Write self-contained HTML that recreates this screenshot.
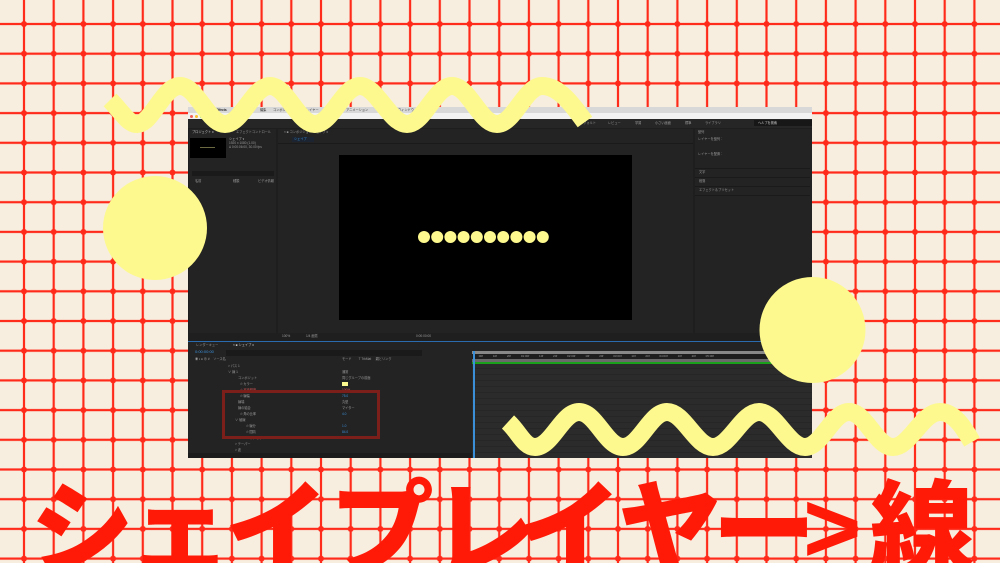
<!DOCTYPE html>
<html style="width:1000px;height:563px;overflow:hidden"><head><meta charset="utf-8"><style>
*{margin:0;padding:0;box-sizing:border-box}
html,body{overflow:hidden}
body{width:1000px;height:563px;overflow:hidden;background:#f7eedf;position:relative;font-family:"Liberation Sans","Noto Sans CJK JP",sans-serif}
.a{position:absolute}
.t{position:absolute;font-size:3.2px;color:#9a9a9a;white-space:nowrap;line-height:1}
.ttl{position:absolute;top:470px;font-family:"Noto Sans CJK JP","Liberation Sans",sans-serif;font-weight:900;font-size:104px;line-height:1;color:#ff1a08;white-space:nowrap}
</style></head><body>
<svg class="a" style="left:0;top:0" width="1000" height="563">
<defs>
<pattern id="g" x="9.15" y="9.15" width="29.7" height="29.7" patternUnits="userSpaceOnUse">
<line x1="14.85" y1="0" x2="14.85" y2="29.7" stroke="#ff2a1a" stroke-width="2.2"/>
<line x1="0" y1="14.85" x2="29.7" y2="14.85" stroke="#ff2a1a" stroke-width="2.2"/>
<circle cx="14.85" cy="14.85" r="3" fill="#ff2a1a"/>
</pattern>
</defs>
<rect width="1000" height="563" fill="url(#g)"/>
</svg>

<div class="a" style="left:188px;top:107px;width:624px;height:351px;background:#1e1e1e;overflow:hidden">
  <div class="a" style="left:0;top:0;width:624px;height:6px;background:#d8d8d8"></div>
  <div class="t" style="left:28px;top:1.5px;color:#222;font-weight:bold">Effects</div>
  <div class="t" style="left:72px;top:1.5px;color:#333">編集</div>
  <div class="t" style="left:85px;top:1.5px;color:#333">コンポジション</div>
  <div class="t" style="left:118px;top:1.5px;color:#333">レイヤー</div>
  <div class="t" style="left:158px;top:1.5px;color:#333">アニメーション</div>
  <div class="t" style="left:210px;top:1.5px;color:#333">ウィンドウ</div>
  <div class="a" style="left:0;top:6px;width:624px;height:6px;background:#f2f2f2"></div>
  <div class="a" style="left:2px;top:8px;width:3px;height:3px;border-radius:50%;background:#f25f58"></div>
  <div class="a" style="left:7px;top:8px;width:3px;height:3px;border-radius:50%;background:#fbbe2e"></div>
  <div class="a" style="left:12px;top:8px;width:3px;height:3px;border-radius:50%;background:#39c94b"></div>
  <div class="a" style="left:0;top:12px;width:624px;height:9px;background:#262626"></div>
  <div class="t" style="left:392px;top:15px">デフォルト</div>
  <div class="t" style="left:420px;top:15px">レビュー</div>
  <div class="t" style="left:447px;top:15px">学習</div>
  <div class="t" style="left:467px;top:15px">小さい画面</div>
  <div class="t" style="left:497px;top:15px">標準</div>
  <div class="t" style="left:517px;top:15px">ライブラリ</div>
  <div class="a" style="left:566px;top:13px;width:58px;height:6px;background:#171717"></div>
  <div class="t" style="left:570px;top:14.5px;color:#ccc">ヘルプを検索</div>
  <div class="a" style="left:1px;top:22px;width:87px;height:204px;background:#232323"></div>
  <div class="t" style="left:4px;top:24px;color:#ccc">プロジェクト ≡</div>
  <div class="t" style="left:48px;top:24px">エフェクトコントロール</div>
  <div class="a" style="left:2px;top:31px;width:36px;height:20px;background:#000"></div>
  <div class="a" style="left:12px;top:40px;width:15px;height:1px;background:#6b6a40"></div>
  <div class="t" style="left:41px;top:31px;color:#bbb">シェイプ ▾</div>
  <div class="t" style="left:41px;top:35px">1920 x 1080 (1.00)</div>
  <div class="t" style="left:41px;top:39px">Δ 0:00:06:00, 30.00 fps</div>
  <div class="a" style="left:4px;top:64px;width:82px;height:5px;background:#1a1a1a"></div>
  <div class="t" style="left:7px;top:73px">名前</div>
  <div class="t" style="left:45px;top:73px">種類</div>
  <div class="t" style="left:70px;top:73px">ビデオ情報</div>
  <div class="a" style="left:90px;top:22px;width:415px;height:204px;background:#232323"></div>
  <div class="t" style="left:96px;top:24px">× ■ コンポジション シェイプ ≡</div>
  <div class="a" style="left:104px;top:30px;width:22px;height:5px;background:#1b2430"></div>
  <div class="t" style="left:106px;top:31px;color:#3b8fd9">シェイプ</div>
  <div class="a" style="left:90px;top:36px;width:415px;height:1px;background:#1a1a1a"></div>
  <div class="a" style="left:151px;top:48px;width:293px;height:165px;background:#000"></div>
  <div class="a" style="left:507px;top:22px;width:117px;height:204px;background:#232323"></div>
  <div class="t" style="left:510px;top:24px">整列</div>
  <div class="t" style="left:510px;top:31px">レイヤーを整列：</div>
  <div class="t" style="left:510px;top:46px">レイヤーを配置：</div>
  <div class="a" style="left:507px;top:61px;width:115px;height:1px;background:#1a1a1a"></div>
  <div class="t" style="left:511px;top:64px">文字</div>
  <div class="a" style="left:507px;top:70px;width:115px;height:1px;background:#1a1a1a"></div>
  <div class="t" style="left:511px;top:73px">段落</div>
  <div class="a" style="left:507px;top:79px;width:115px;height:1px;background:#1a1a1a"></div>
  <div class="t" style="left:511px;top:82px">エフェクト＆プリセット</div>
  <div class="a" style="left:507px;top:88px;width:115px;height:1px;background:#1a1a1a"></div>
  <div class="a" style="left:0;top:226px;width:624px;height:8px;background:#1f1f1f"></div>
  <div class="t" style="left:94px;top:228px">100%</div>
  <div class="t" style="left:118px;top:228px">1/4 画質</div>
  <div class="t" style="left:228px;top:228px">0:00:00:00</div>
  <div class="a" style="left:0;top:234px;width:624px;height:1px;background:#2a6bb0"></div>
  <div class="a" style="left:0;top:235px;width:624px;height:116px;background:#232323"></div>
  <div class="t" style="left:8px;top:237px">レンダーキュー</div>
  <div class="t" style="left:45px;top:237px;color:#ccc">× ■ シェイプ ≡</div>
  <div class="t" style="left:7px;top:243px;color:#3b8fd9;font-size:4px">0:00:00:00</div>
  <div class="a" style="left:38px;top:243px;width:196px;height:6px;background:#1a1a1a"></div>
  <div class="t" style="left:7px;top:251px">◉◑ ● ⊕ #&nbsp;&nbsp;&nbsp; ソース名</div>
  <div class="t" style="left:154px;top:251px">モード&nbsp;&nbsp;&nbsp;&nbsp;&nbsp;&nbsp;&nbsp; T TrkMat&nbsp;&nbsp;&nbsp;&nbsp; 親とリンク</div>
  <div class="t" style="left:40px;top:258px">&gt; パス 1</div>
  <div class="t" style="left:40px;top:264px">∨ 線 1</div>
  <div class="t" style="left:50px;top:270px">コンポジット</div>
  <div class="t" style="left:52px;top:276px">⏱ カラー</div>
  <div class="t" style="left:52px;top:282px;color:#d05050">⏱ 不透明度</div>
  <div class="t" style="left:52px;top:288px">⏱ 線幅</div>
  <div class="t" style="left:50px;top:294px">線端</div>
  <div class="t" style="left:50px;top:300px">線の結合</div>
  <div class="t" style="left:52px;top:306px">⏱ 角の比率</div>
  <div class="t" style="left:47px;top:312px">∨ 破線</div>
  <div class="t" style="left:58px;top:318px">⏱ 線分</div>
  <div class="t" style="left:58px;top:324px">⏱ 間隔</div>
  <div class="t" style="left:58px;top:330px;color:#d05050">⏱ オフセット</div>
  <div class="t" style="left:47px;top:336px">&gt; テーパー</div>
  <div class="t" style="left:47px;top:342px">&gt; 波</div>
  <div class="t" style="left:154px;top:264px">通常</div>
  <div class="t" style="left:154px;top:270px">同じグループの前面</div>
  <div class="a" style="left:154px;top:275px;width:6px;height:4px;background:#fdf98e"></div>
  <div class="t" style="left:154px;top:282px;color:#d05050">100%</div>
  <div class="t" style="left:154px;top:288px;color:#3b8fd9">75.0</div>
  <div class="t" style="left:154px;top:294px">丸型</div>
  <div class="t" style="left:154px;top:300px">マイター</div>
  <div class="t" style="left:154px;top:306px;color:#3b8fd9">4.0</div>
  <div class="t" style="left:154px;top:318px;color:#3b8fd9">1.0</div>
  <div class="t" style="left:154px;top:324px;color:#3b8fd9">84.0</div>
  <div class="t" style="left:154px;top:330px;color:#d05050">0.0</div>
  <div class="a" style="left:34px;top:283px;width:158px;height:49px;border:3px solid #7c1e1a"></div>
  <div class="a" style="left:0;top:346px;width:624px;height:5px;background:#1c1c1c"></div>
  <div class="a" style="left:284px;top:244px;width:340px;height:107px;background:repeating-linear-gradient(#2b2b2b 0 5px,#262626 5px 6px)"></div>
  <div class="a" style="left:284px;top:244px;width:340px;height:3px;background:#888"></div>
  <div class="a" style="left:284px;top:247px;width:340px;height:5px;background:#1e1e1e"></div>
  <div class="t" style="left:290px;top:248px;font-size:3px;word-spacing:9px">:00f 10f 20f 01:00f 10f 20f 02:00f 10f 20f 03:00f 10f 20f 04:00f 10f 20f 05:00f</div>
  <div class="a" style="left:284px;top:252px;width:340px;height:3px;background:#6a6a6a"></div>
  <div class="a" style="left:284px;top:255px;width:300px;height:1.5px;background:#1aa01a"></div>
  <div class="a" style="left:285px;top:244px;width:1.5px;height:107px;background:#3b8fd9"></div>
</div>

<svg class="a" style="left:0;top:0" width="1000" height="563">
<g fill="#fdf98e">
<circle cx="155" cy="228" r="52"/>
<circle cx="812.5" cy="330" r="53"/>
<circle cx="424" cy="237" r="6"/><circle cx="437.2" cy="237" r="6"/><circle cx="450.4" cy="237" r="6"/><circle cx="463.6" cy="237" r="6"/><circle cx="476.8" cy="237" r="6"/><circle cx="490" cy="237" r="6"/><circle cx="503.2" cy="237" r="6"/><circle cx="516.4" cy="237" r="6"/><circle cx="529.6" cy="237" r="6"/><circle cx="542.8" cy="237" r="6"/>
</g>
<path d="M110 100 C122 112 128 124 137 124 C152 124 163 86 180 86 C197 86 208 124 225 124 C242 124 253 86 270 86 C287 86 298 124 315 124 C332 124 343 86 360 86 C377 86 390 124 407 124 C424 124 435 86 452 86 C469 86 480 124 497 124 C514 124 525 86 542 86 C559 86 572 104 585 122" fill="none" stroke="#fdf98e" stroke-width="18"/>
<path d="M508 422 C519 432 524 447 535 447 C552 447 562 412 579 412 C596 412 606 447 623 447 C640 447 650 412 667 412 C684 412 696 447 713 447 C730 447 742 412 759 412 C776 412 788 447 805 447 C822 447 832 412 849 412 C866 412 876 447 893 447 C910 447 922 412 940 412 C955 412 965 430 972 442" fill="none" stroke="#fdf98e" stroke-width="18"/>
</svg>

<div class="a" style="left:0;top:0;width:1000px;height:563px;overflow:hidden">
<div class="ttl" style="left:30px">シ</div>
<div class="ttl" style="left:128px">ェ</div>
<div class="ttl" style="left:225px">イ</div>
<div class="ttl" style="left:330px">プ</div>
<div class="ttl" style="left:432px">レ</div>
<div class="ttl" style="left:518px">イ</div>
<div class="ttl" style="left:618px">ヤ</div>
<div class="ttl" style="left:712px">ー</div>
<div class="ttl" style="left:803px;font-family:'Liberation Sans',sans-serif;font-weight:bold;font-size:100px;top:478px">&gt;</div>
<div class="ttl" style="left:870px">線</div>
</div>
</body></html>
